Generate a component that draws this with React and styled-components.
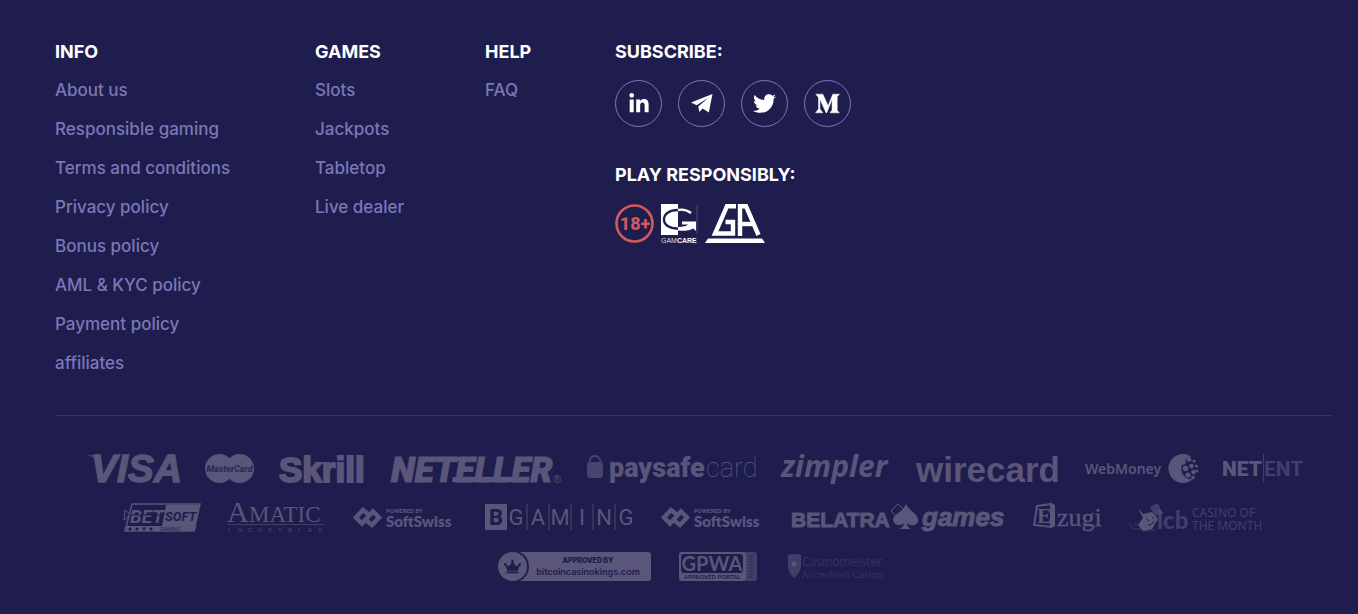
import React from 'react';
import styled, { createGlobalStyle } from 'styled-components';
import { FaLinkedinIn, FaTwitter, FaMediumM, FaCrown } from 'react-icons/fa';

const BG = '#1f1d4d';
const LOGO = '#59567a';

const info = [
  'About us',
  'Responsible gaming',
  'Terms and conditions',
  'Privacy policy',
  'Bonus policy',
  'AML & KYC policy',
  'Payment policy',
  'affiliates'
];
const games = ['Slots', 'Jackpots', 'Tabletop', 'Live dealer'];
const help = ['FAQ'];

const LinkColumn = ({ title, links }) => (
  <div>
    <Title>{title}</Title>
    <List>
      {links.map((link) => (
        <li key={link}>
          <FooterLink href='#'>{link}</FooterLink>
        </li>
      ))}
    </List>
  </div>
);

const Telegram = () => (
  <svg width='22' height='19' viewBox='0 0 22 19' fill='currentColor'>
    <path d='M0 8.600 L21.500 0 L17.800 18.600 L11.600 14.400 L8.400 18 L7.200 12.600 L17.600 3.800 L5.600 11.200 Z' />
  </svg>
);

const Over18 = () => (
  <svg width='39' height='39' viewBox='0 0 39 39'>
    <circle cx='19.500' cy='19.500' r='18' fill='none' stroke='#d05a5c' strokeWidth='2.600' />
    <text x='20' y='26' textAnchor='middle' fontFamily='Roboto' fontWeight='800' fontSize='18' fill='#d05a5c'>
      18+
    </text>
  </svg>
);

const GamCare = () => (
  <svg width='37' height='39' viewBox='0 0 37 39'>
    <path d='M0 0 H17 V31 H0 Z' fill='#fff' />
    <path d='M17 6 C8 6 3 10 3 15.500 C3 21 9 25 17 24.500' fill='none' stroke={BG} strokeWidth='2.400' />
    <path d='M17 6 C21 5.200 26 6 30 9' fill='none' stroke='#fff' strokeWidth='2.400' />
    <path d='M17 23 C22 23 26 22 27 20.500 H21 V17.500 H35 V27 L32.500 24.500 C28 27 22 27 17 26.500 Z' fill='#fff' />
    <path d='M36 1 V30' stroke='#4d4a73' strokeWidth='1' />
    <text x='0' y='39' fontFamily='Liberation Sans' fontSize='7' fill='#dddce8'>
      GAM<tspan fontWeight='700' fill='#fff'>CARE</tspan>
    </text>
  </svg>
);

const GamAnon = () => (
  <svg width='60' height='39' viewBox='0 0 60 39' fill='none' stroke='#fff' strokeWidth='4.400'>
    <path d='M0 39 L3 34.500 H57 L60 39 Z' fill='#fff' stroke='none' />
    <path d='M31 2.200 H22 L10 29.500 H28 V18 H20.500' />
    <path d='M35 32 V2.200 H41 L53.500 31' />
    <path d='M35 20 H47' />
  </svg>
);

const Visa = () => (
  <Logo width='92' height='29' viewBox='0 0 92 29'>
    <path d='M0 1 H12 L16 14 C13 8 7 3 0 1 Z' opacity='.6' />
    <text x='4' y='28' fontSize='39' fontWeight='700' fontStyle='italic' stroke={LOGO} strokeWidth='1.400'>VISA</text>
  </Logo>
);

const MasterCard = () => (
  <Logo width='49' height='29' viewBox='0 0 49 29'>
    <circle cx='14.500' cy='14.500' r='14.500' />
    <circle cx='34.500' cy='14.500' r='14.500' />
    <text x='24.500' y='18' textAnchor='middle' fontFamily='Roboto' fontSize='9' fontWeight='800' fontStyle='italic' fill='#2b2856'>
      MasterCard
    </text>
  </Logo>
);

const Skrill = () => (
  <Logo width='85' height='29' viewBox='0 0 85 29'>
    <text x='-1' y='28' fontSize='35' fontWeight='700' stroke={LOGO} strokeWidth='2'>Skrill</text>
  </Logo>
);

const Neteller = () => (
  <Logo width='170' height='29' viewBox='0 0 170 29'>
    <text x='0' y='28' fontFamily='Roboto' fontSize='35' fontWeight='900' fontStyle='italic' stroke={LOGO}>NETELLER</text>
    <path d='M62 23 H133 L132 28 H61 Z M30 3 H80 L79 7 H29 Z' />
    <text x='162' y='29' fontSize='11'>®</text>
  </Logo>
);

const Paysafe = () => (
  <Logo width='168' height='29' viewBox='0 0 168 29'>
    <rect x='0' y='8' width='16' height='16' rx='3' opacity='.7' />
    <path d='M2.500 8 C3 0 13 0 13.500 8' fill='none' stroke={LOGO} strokeWidth='2' opacity='.7' />
    <text x='22' y='23' fontFamily='Roboto' fontSize='27' fontWeight='900'>paysafe</text>
    <text x='119' y='23' fontFamily='Roboto' fontSize='27' fontWeight='100'>card</text>
  </Logo>
);

const Zimpler = () => (
  <Logo width='109' height='29' viewBox='0 0 109 29'>
    <text x='0' y='23' fontFamily='Noto Sans' fontSize='30' fontWeight='700' fontStyle='italic'>zimpler</text>
  </Logo>
);

const Wirecard = () => (
  <Logo width='143' height='29' viewBox='0 0 143 29'>
    <text x='0' y='28' fontSize='35' fontWeight='700'>wirecard</text>
  </Logo>
);

const WebMoney = () => (
  <Logo width='111' height='29' viewBox='0 0 111 29'>
    <text x='0' y='20' fontFamily='Noto Sans' fontSize='14' fontWeight='600'>WebMoney</text>
    <path d='M106 2.500 A14.500 14.500 0 1 0 108 25 C96 27 90 8 106 2.500 Z' />
    <g>
      <circle cx='98' cy='8' r='2.800' />
      <circle cx='104' cy='5.500' r='2.300' />
      <circle cx='109' cy='7' r='1.600' />
      <circle cx='100.500' cy='14.500' r='2.800' />
      <circle cx='106.500' cy='12' r='2.300' />
      <circle cx='111.500' cy='12' r='1.600' />
      <circle cx='103' cy='21' r='2.600' />
      <circle cx='108.500' cy='18' r='2.300' />
      <circle cx='112' cy='17' r='1.400' />
      <circle cx='108' cy='23.500' r='1.800' />
    </g>
  </Logo>
);

const NetEnt = () => (
  <Logo width='79' height='29' viewBox='0 0 79 29'>
    <text x='0' y='22' fontFamily='Roboto' fontSize='21' fontWeight='900'>NET</text>
    <text x='42' y='22' fontFamily='Roboto' fontSize='21' fontWeight='700' opacity='.6'>ENT</text>
    <path d='M41 0 H42 V29 H41 Z' opacity='.6' />
  </Logo>
);

const BetSoft = () => (
  <Logo width='77' height='29' viewBox='0 0 77 29'>
    <path d='M8 1 H76 L70 28 H1 Z' fill='none' stroke={LOGO} strokeWidth='1.500' />
    <path d='M42 2 H75 L71 23 H38 Z' />
    <path d='M1 7 L7 12 L0 17 Z' fill='none' stroke={LOGO} />
    <text x='6' y='20' fontFamily='Roboto' fontSize='19' fontWeight='700' fontStyle='italic'>BET</text>
    <path d='M5 12 H40' stroke={BG} strokeWidth='1' />
    <text x='41' y='18' fontFamily='Roboto' fontSize='13' fontWeight='700' fontStyle='italic' fill={BG}>SOFT</text>
    <path d='M3 23 H72 L71 28 H2 Z' />
    <g fill={BG}>
      <path d='M6 24 L8 26 L6 28 L4 26 Z' />
      <circle cx='13' cy='26' r='1.500' />
      <path d='M18 24.500 H22 L20 28 Z' />
      <circle cx='27' cy='26' r='1.500' />
      <text x='36' y='28' fontSize='5'>GAMING</text>
    </g>
  </Logo>
);

const Amatic = () => (
  <Logo width='100' height='29' viewBox='0 0 100 29'>
    <text x='0' y='19' fontFamily='Liberation Serif' fontSize='30'>A</text>
    <text x='22' y='19' fontFamily='Liberation Serif' fontSize='23'>MATIC</text>
    <path d='M0 21 H97 V22 H0 Z' opacity='.6' />
    <g fontSize='6' opacity='.8'>
      {'INDUSTRIES'.split('').map((c, i) => (
        <text key={i} x={1 + i * 10} y='29'>{c}</text>
      ))}
    </g>
  </Logo>
);

const SoftSwiss = ({ width }) => (
  <Logo width={width} height='29' viewBox={`0 0 ${width} 29`}>
    <path
      d='M15 11 L10 7 L3 14.500 L9 20.500 L20 8.500 L26 14.500 L19 22 L14 18'
      fill='none'
      stroke={LOGO}
      strokeWidth='4.500'
    />
    <text x='33' y='10' fontFamily='Roboto' fontSize='6' fontWeight='700'>POWERED BY</text>
    <text x='33' y='24' fontFamily='Lato' fontSize='15' fontWeight='800'>SoftSwiss</text>
  </Logo>
);

const BGaming = () => (
  <Logo width='150' height='29' viewBox='0 0 150 29'>
    <rect x='0' y='1' width='22' height='26' />
    <text x='4' y='22' fontFamily='Roboto' fontSize='22' fontWeight='800' fill={BG}>B</text>
    <g fontFamily='Roboto' fontSize='22'>
      {'GAMING'.split('').map((c, i) => (
        <text key={i} x={31 + i * 22} y='22' textAnchor='middle'>{c}</text>
      ))}
    </g>
    <path d='M42 1 V27 M64 1 V27 M86 1 V27 M108 1 V27 M130 1 V27' stroke={LOGO} opacity='.8' />
  </Logo>
);

const Belatra = () => (
  <Logo width='216' height='29' viewBox='0 0 216 29'>
    <text x='0' y='24' fontSize='21' fontWeight='700' stroke={LOGO}>BELATRA</text>
    <path d='M107 1 L114 8 L107 15 L100 8 Z' fill='none' stroke={LOGO} />
    <path d='M115 1 C119 9 128 11 127 18 C126 23 119 24 116 20 C116 23 118 25 120 26 H108 C111 25 113 23 113 20 C109 24 102 22 102 16 C103 11 112 9 115 1 Z' />
    <text x='131' y='23' fontSize='26' fontWeight='700' fontStyle='italic' stroke={LOGO}>games</text>
  </Logo>
);

const Ezugi = () => (
  <Logo width='69' height='29' viewBox='0 0 69 29'>
    <path d='M4 3 L18 1 V24 L1 22 Z' fill='none' stroke={LOGO} strokeWidth='2' />
    <path d='M18 0 L22 2 V23 L18 25 Z' />
    <text x='4' y='20' fontFamily='Liberation Serif' fontSize='22' fontWeight='700'>E</text>
    <text x='24' y='23' fontFamily='Liberation Serif' fontSize='26' stroke={LOGO} strokeWidth='.4'>zugi</text>
  </Logo>
);

const Lcb = () => (
  <Logo width='136' height='29' viewBox='0 0 136 29'>
    <path d='M10 5 L15 11 L24 9 L30 16 L24 26 L15 28 L10 22 L15 15 Z' />
    <path d='M22 4 L30 0 L33 8 L36 10 L27 13 Z' opacity='.6' />
    <path d='M1 21 L5 26 H14 M6 21 H10 M15 28 L28 27' fill='none' stroke={LOGO} opacity='.5' />
    <path d='M18 16 L21 18 M24 14 L26 16 M20 22 C23 22 25 21 26 18' fill='none' stroke={BG} />
    <text x='29' y='26' fontFamily='Lato' fontSize='24' fontWeight='900' opacity='.6'>lcb</text>
    <g fontFamily='Noto Sans' fontSize='12' opacity='.6'>
      <text x='64' y='14'>CASINO OF</text>
      <text x='64' y='27'>THE MONTH</text>
    </g>
  </Logo>
);

const CasinoKings = () => (
  <Logo width='155' height='29' viewBox='0 0 155 29'>
    <path d='M22 0 H150 Q153 0 153 3 V26 Q153 29 150 29 H22 Q31 24 31 14.500 Q31 5 22 0 Z' />
    <circle cx='14.500' cy='14.500' r='14.500' />
    <FaCrown x='6' y='6' size='17' color={BG} />
    <g fontFamily='Inter' fill={BG} textAnchor='middle'>
      <text x='90' y='11' fontSize='7' fontWeight='900'>APPROVED BY</text>
      <text x='90' y='23' fontSize='9' fontWeight='600'>bitcoincasinokings.com</text>
    </g>
  </Logo>
);

const Gpwa = () => (
  <Logo width='82' height='29' viewBox='0 0 82 29'>
    <rect x='0' y='0' width='78' height='29' rx='3' opacity='.6' />
    <rect x='0' y='0' width='67' height='29' rx='3' />
    <rect x='2' y='2' width='62' height='19' rx='3' fill={BG} />
    <text x='33' y='19' textAnchor='middle' fontFamily='Lato' fontSize='20' fontWeight='700'>GPWA</text>
    <text x='33' y='27' textAnchor='middle' fontFamily='Lato' fontSize='6' fontWeight='700' fill={BG}>APPROVED PORTAL</text>
    <path d='M72 3 V26' stroke={BG} strokeWidth='3' strokeDasharray='2 1' opacity='.4' />
  </Logo>
);

const Casinomeister = () => (
  <Logo width='103' height='29' viewBox='0 0 103 29'>
    <path d='M1 3 Q8 1 14 3 V14 Q13 22 7 26 Q1 21 1 14 Z' opacity='.6' />
    <circle cx='7' cy='12' r='2.500' />
    <g fontFamily='Open Sans' opacity='.4'>
      <text x='15' y='14' fontSize='12'>Casinomeister</text>
      <text x='14' y='26' fontFamily='Liberation Serif' fontSize='11'>Accredited Casino</text>
    </g>
  </Logo>
);

const App = () => {
  return (
    <Footer>
      <GlobalStyle />
      <Columns>
        <LinkColumn title='INFO' links={info} />
        <LinkColumn title='GAMES' links={games} />
        <LinkColumn title='HELP' links={help} />
        <div>
          <Title>SUBSCRIBE:</Title>
          <Socials>
            <SocialLink href='#' aria-label='LinkedIn'>
              <FaLinkedinIn size={22} />
            </SocialLink>
            <SocialLink href='#' aria-label='Telegram'>
              <Telegram />
            </SocialLink>
            <SocialLink href='#' aria-label='Twitter'>
              <FaTwitter size={23} />
            </SocialLink>
            <SocialLink href='#' aria-label='Medium'>
              <FaMediumM size={25} stroke='currentColor' strokeWidth={10} />
            </SocialLink>
          </Socials>
          <Title>PLAY RESPONSIBLY:</Title>
          <Badges>
            <Over18 />
            <GamCare />
            <GamAnon />
          </Badges>
        </div>
      </Columns>
      <Logos>
        <Visa />
        <MasterCard />
        <Skrill />
        <Neteller />
        <Paysafe />
        <Zimpler />
        <Wirecard />
        <WebMoney />
        <NetEnt />
        <BetSoft />
        <Amatic />
        <SoftSwiss width={106} />
        <BGaming />
        <SoftSwiss width={104} />
        <Belatra />
        <Ezugi />
        <Lcb />
        <CasinoKings />
        <Gpwa />
        <Casinomeister />
      </Logos>
    </Footer>
  );
};

const GlobalStyle = createGlobalStyle`
  * {
    box-sizing: border-box;
  }

  body {
    margin: 0;
    background-color: ${BG};
    font-family: Inter, 'Open Sans', sans-serif;
  }
`;

const Footer = styled.footer`
  padding: 41px 26px 33px 55px;
`;

const Columns = styled.div`
  display: grid;
  grid-template-columns: 260px 170px 130px 1fr;
  padding-bottom: 32px;
  border-bottom: 1px solid #35325f;
`;

const Title = styled.h4`
  margin: 0;
  font-size: 18px;
  font-weight: 700;
  line-height: 22px;
  color: #fff;
`;

const List = styled.ul`
  margin: 8px 0 0;
  padding: 0;
  list-style: none;
`;

const FooterLink = styled.a`
  display: block;
  font-size: 17px;
  font-weight: 500;
  line-height: 39px;
  color: #7b77b8;
  text-decoration: none;

  &:hover {
    color: #fff;
  }
`;

const Socials = styled.div`
  display: flex;
  gap: 16px;
  margin: 17px 0 37px;
`;

const SocialLink = styled.a`
  display: flex;
  justify-content: center;
  align-items: center;
  width: 47px;
  height: 47px;
  border: 1px solid #7b77b8;
  border-radius: 50%;
  color: #fff;

  &:hover {
    border-color: #fff;
  }
`;

const Badges = styled.div`
  display: flex;
  gap: 7px;
  margin-top: 18px;
`;

const Logos = styled.div`
  display: flex;
  flex-wrap: wrap;
  justify-content: center;
  gap: 20px 26px;
  padding-top: 38px;
`;

const Logo = styled.svg`
  flex: none;
  overflow: visible;
  fill: ${LOGO};
  font-family: 'Liberation Sans', sans-serif;
`;

export default App;
